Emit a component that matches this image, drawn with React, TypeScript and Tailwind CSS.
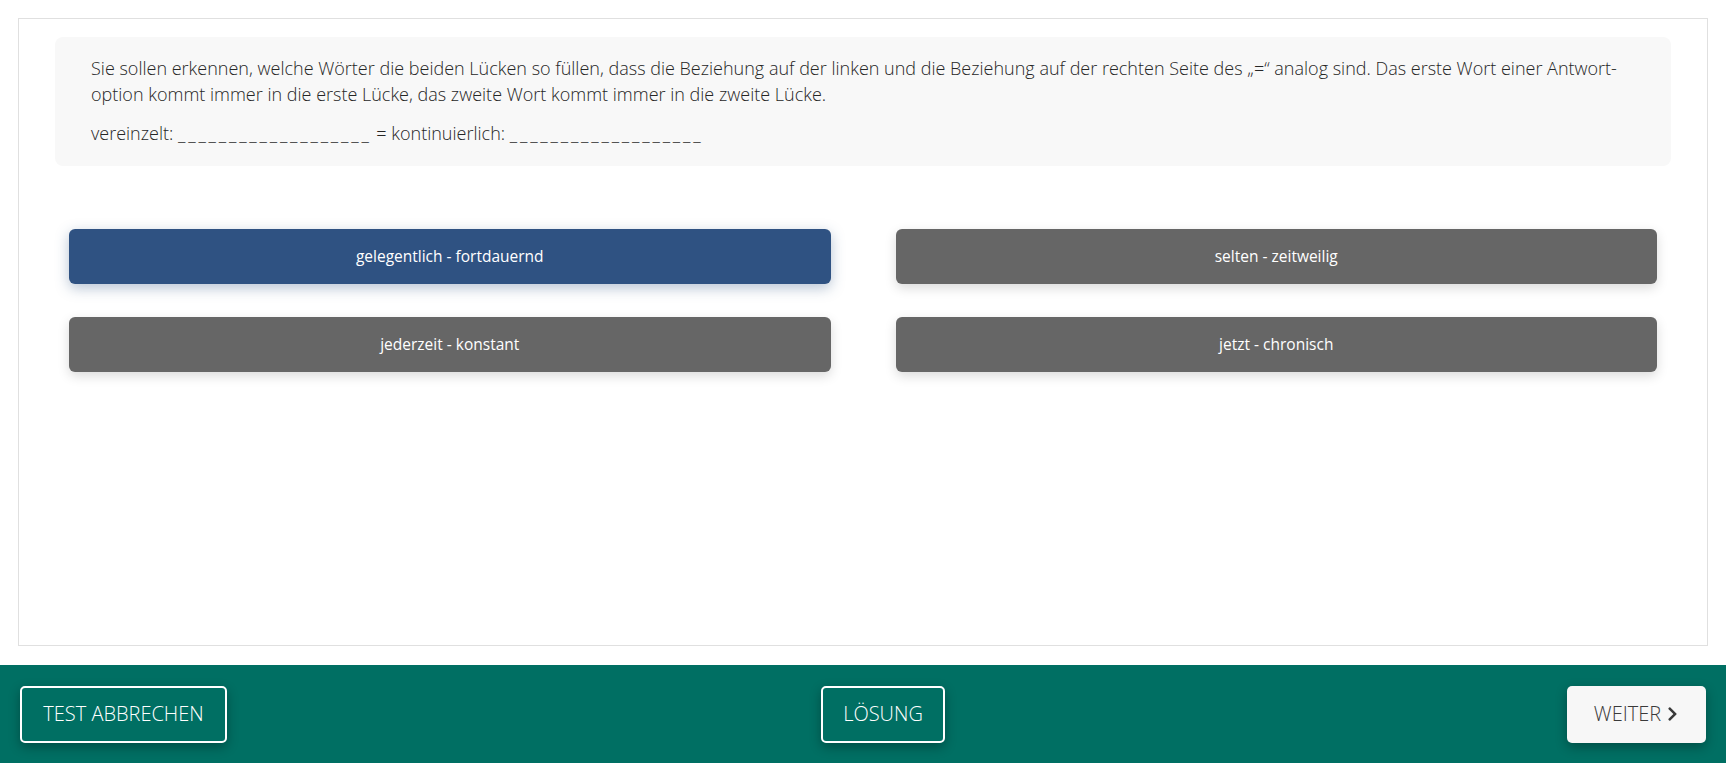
import React, { useState } from 'react';
import { FaChevronRight } from 'react-icons/fa';

const options = [
  'gelegentlich - fortdauernd',
  'selten - zeitweilig',
  'jederzeit - konstant',
  'jetzt - chronisch',
];

const blank = '___________________';

export default function App() {
  const [selected, setSelected] = useState(0);

  return (
    <div className="flex h-[763px] w-full flex-col bg-white font-['Open_Sans',sans-serif]">
      {/* Question card */}
      <div className="mx-[18px] mt-[18px] h-[628px] border border-[#e0e0e0] px-[36px] pt-[18px]">
        <div className="rounded-lg bg-[#f8f8f8] px-[36px] pb-[20px] pt-[18px] text-[18px] font-light leading-[26px] text-[#262626]">
          <p className="mb-[13px]">
            Sie sollen erkennen, welche Wörter die beiden Lücken so füllen, dass die Beziehung auf der linken und die
            Beziehung auf der rechten Seite des „=“ analog sind. Das erste Wort einer Antwort-
            <br />
            option kommt immer in die erste Lücke, das zweite Wort kommt immer in die zweite Lücke.
          </p>
          <p>
            vereinzelt: <span className="tracking-[2.8px]">{blank}</span> = kontinuierlich:{' '}
            <span className="tracking-[2.8px]">{blank}</span>
          </p>
        </div>

        {/* Answer options */}
        <div className="mt-[63px] grid grid-cols-2 gap-x-[65px] gap-y-[33px] px-[14px]">
          {options.map((opt, i) => (
            <button
              key={opt}
              onClick={() => setSelected(i)}
              className={
                i === selected
                  ? 'h-[55px] rounded-md bg-[#2f5282] text-[15.5px] text-white shadow-[0_4px_14px_rgba(47,82,130,0.35)]'
                  : 'h-[55px] rounded-md bg-[#666666] text-[15.5px] text-white shadow-[0_4px_12px_rgba(0,0,0,0.15)]'
              }
            >
              {opt}
            </button>
          ))}
        </div>
      </div>

      {/* Footer */}
      <div className="mt-[19px] flex h-[98px] items-center justify-between bg-[#006f63] px-[20px]">
        <button className="h-[57px] w-[207px] rounded-[5px] border-2 border-white text-[20px] font-light text-white shadow-[0_4px_12px_rgba(0,0,0,0.3)]">
          TEST ABBRECHEN
        </button>
        <button className="mr-[28px] h-[57px] w-[124px] rounded-[5px] border-2 border-white text-[20px] font-light text-white shadow-[0_4px_12px_rgba(0,0,0,0.3)]">
          LÖSUNG
        </button>
        <button className="flex h-[57px] w-[139px] items-center justify-center gap-[5px] rounded-[5px] bg-[#f7f7f7] text-[20px] font-light text-[#3a3a3a] shadow-[0_4px_12px_rgba(0,0,0,0.3)]">
          WEITER
          <FaChevronRight className="h-[16px] w-[13px]" />
        </button>
      </div>
    </div>
  );
}
